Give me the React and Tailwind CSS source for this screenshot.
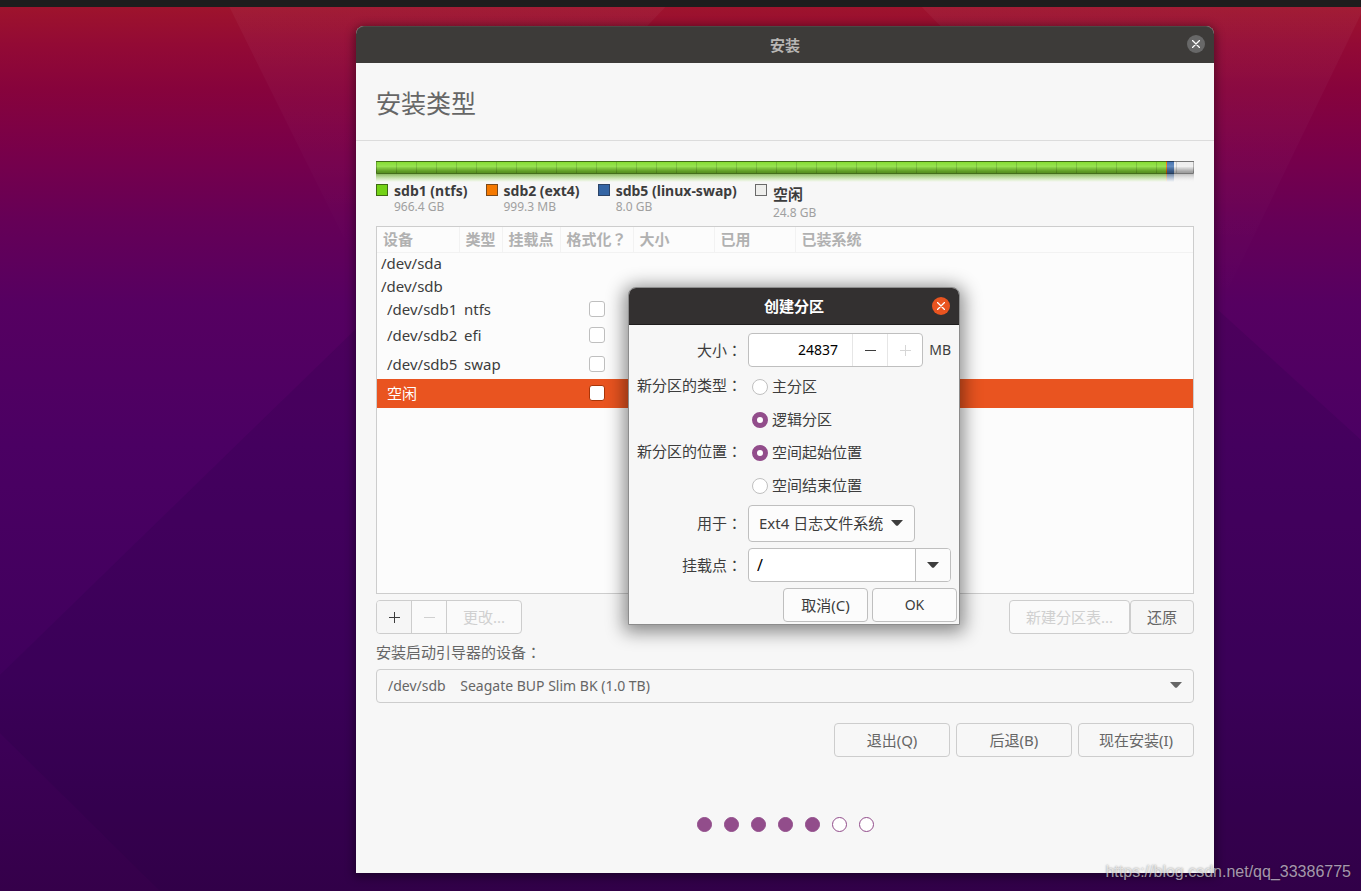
import { useState } from "react";

const PARTITIONS = [
  { name: "sdb1 (ntfs)", size: "966.4 GB", gb: 966.4, swatch: "bg-[#73d216] border-[#3f6b14]", fill: "bg-[#86dd33]" },
  { name: "sdb2 (ext4)", size: "999.3 MB", gb: 1, swatch: "bg-[#f57900] border-[#7a4a1c]", fill: "bg-[#f57900]" },
  { name: "sdb5 (linux-swap)", size: "8.0 GB", gb: 8, swatch: "bg-[#3465a4] border-[#2c4467]", fill: "bg-[#4a77b4]" },
  { name: "空闲", size: "24.8 GB", gb: 24.8, swatch: "bg-[#eeeeec] border-[#6a6a6a]", fill: "bg-[#eeeeee]" },
];

const COLUMNS = [
  { label: "设备", width: "w-[82px]" },
  { label: "类型", width: "w-[43px]" },
  { label: "挂载点", width: "w-[58px]" },
  { label: "格式化？", width: "w-[73px]" },
  { label: "大小", width: "w-[81px]" },
  { label: "已用", width: "w-[81px]" },
  { label: "已装系统", width: "" },
];

const DEVICES = [
  { name: "/dev/sda", type: "", disk: true, height: "h-[23px]" },
  { name: "/dev/sdb", type: "", disk: true, height: "h-[23px]" },
  { name: "/dev/sdb1", type: "ntfs", height: "h-[23px]" },
  { name: "/dev/sdb2", type: "efi", height: "h-[29px]" },
  { name: "/dev/sdb5", type: "swap", height: "h-[29px]" },
  { name: "空闲", type: "", selected: true, height: "h-[29px]" },
];

const TOTAL_STEPS = 7;
const CURRENT_STEP = 5;

function Wallpaper() {
  return (
    <svg className="absolute inset-0 h-full w-full" viewBox="0 0 1361 891" preserveAspectRatio="none" aria-hidden="true">
      <defs>
        <linearGradient id="sky" x1="0" y1="0" x2="0" y2="1">
          <stop offset="0" stopColor="#a0152b" />
          <stop offset="0.05" stopColor="#930a35" />
          <stop offset="0.1" stopColor="#87033c" />
          <stop offset="0.17" stopColor="#78004a" />
          <stop offset="0.25" stopColor="#650057" />
          <stop offset="0.34" stopColor="#560061" />
          <stop offset="0.5" stopColor="#4b0063" />
          <stop offset="0.75" stopColor="#40005d" />
          <stop offset="0.88" stopColor="#3a0053" />
          <stop offset="1" stopColor="#35004a" />
        </linearGradient>
        <linearGradient id="ray" x1="0" y1="0" x2="0" y2="1">
          <stop offset="0" stopColor="#fff" stopOpacity="0.04" />
          <stop offset="1" stopColor="#fff" stopOpacity="0" />
        </linearGradient>
      </defs>
      <rect width="1361" height="891" fill="url(#sky)" />
      <polygon points="226,0 672,0 500,180 360,270" fill="url(#ray)" />
      <polygon points="915,0 1361,0 1361,14 1218,310" fill="url(#ray)" />
      <polygon points="0,675 360,325 1218,310 1361,440 1361,891 160,891 0,733" fill="#1a0040" fillOpacity="0.14" />
    </svg>
  );
}

function CloseButton({ className, label }) {
  return (
    <button
      type="button"
      aria-label={label}
      className={`absolute right-[9px] flex h-[18px] w-[18px] items-center justify-center rounded-full text-white ${className}`}
    >
      <svg viewBox="0 0 8 8" className="h-2 w-2" stroke="currentColor" strokeWidth="1.3" strokeLinecap="round">
        <path d="M0.5 0.5 L7.5 7.5 M7.5 0.5 L0.5 7.5" />
      </svg>
    </button>
  );
}

function Caret({ className }) {
  return (
    <svg viewBox="0 0 12 6" className={`h-1.5 w-3 ${className}`} fill="currentColor" aria-hidden="true">
      <path d="M0 0 H12 L7 5.4 Q6 6 5 5.4 Z" />
    </svg>
  );
}

function Sign({ plus }) {
  return (
    <svg viewBox="0 0 11 11" className="h-[11px] w-[11px]" stroke="currentColor" aria-hidden="true">
      <path d={plus ? "M0 5.5 H11 M5.5 0 V11" : "M0 5.5 H11"} />
    </svg>
  );
}

function DiskBar() {
  return (
    <div>
      <div className="relative flex h-[13px]">
        {PARTITIONS.map(p => (
          <div key={p.name} className={`min-w-px basis-0 ${p.fill}`} style={{ flexGrow: p.gb }} />
        ))}
        <div className="absolute inset-0 border border-b-black/50 border-black/25 bg-linear-to-b from-white/0 via-white/15 via-40% to-black/35" />
        <div className="absolute inset-y-px left-px right-0 bg-[repeating-linear-gradient(to_right,transparent_0px,transparent_19px,rgba(0,0,0,0.14)_19px,rgba(0,0,0,0.14)_20px)]" />
      </div>
      {/* reflection */}
      <div className="relative flex h-2">
        {PARTITIONS.map(p => (
          <div key={p.name} className={`min-w-px basis-0 ${p.fill}`} style={{ flexGrow: p.gb }} />
        ))}
        <div className="absolute inset-0 bg-linear-to-b from-black/30 to-transparent" />
        <div className="absolute inset-0 bg-linear-to-b from-[#f7f7f7]/30 to-[#f7f7f7]" />
      </div>
    </div>
  );
}

function Legend() {
  return (
    <ul className="flex items-start gap-[18px]">
      {PARTITIONS.map(p => (
        <li key={p.name} className="flex items-start gap-1.5">
          <span className={`mt-0.5 h-3 w-3 border ${p.swatch}`} />
          <div>
            <div className={`font-bold text-[#3d3d3d] ${p.name === "空闲" ? "text-[15px] leading-6" : "text-sm leading-[18px]"}`}>{p.name}</div>
            <div className="text-xs leading-[13px] text-[#a0a0a0]">{p.size}</div>
          </div>
        </li>
      ))}
    </ul>
  );
}

function DeviceTable() {
  return (
    <div className="min-h-[368px] border border-[#cdcdcd] bg-[#fcfcfc]">
      <table className="w-full table-fixed border-collapse text-left">
        <thead>
          <tr className="h-[25px]">
            {COLUMNS.map(col => (
              <th
                key={col.label}
                className={`border-b border-r border-[#f2f2f2] py-0 pl-1.5 font-bold leading-6 whitespace-nowrap text-[#b1b1b1] last:border-r-0 ${col.width}`}
              >
                {col.label}
              </th>
            ))}
          </tr>
        </thead>
        <tbody>
          {DEVICES.map(d => (
            <tr key={d.name} className={`${d.height} ${d.selected ? "bg-[#e95420] text-white" : "text-[#3d3d3d]"}`}>
              <td className={`p-0 pb-0.5 leading-5 whitespace-nowrap ${d.disk ? "pl-1" : "pl-2.5"}`}>{d.name}</td>
              <td className="p-0 pb-0.5 pl-[5px] leading-5 whitespace-nowrap">{d.type}</td>
              <td className="p-0" />
              <td className="p-0 pb-0.5">
                {!d.disk && (
                  <input
                    type="checkbox"
                    aria-label={`格式化 ${d.name}`}
                    className={`mx-auto block h-4 w-4 appearance-none rounded-[3px] border bg-white checked:bg-[#924d8b] ${
                      d.selected ? "border-[#a83508]" : "border-[#bfbfbf]"
                    }`}
                  />
                )}
              </td>
              <td className="p-0" />
              <td className="p-0" />
              <td className="p-0" />
            </tr>
          ))}
        </tbody>
      </table>
    </div>
  );
}

function TableActions() {
  return (
    <div className="mt-1.5 flex h-[34px] justify-between">
      <div className="flex overflow-hidden rounded border border-[#cdcdcd] bg-[#fafafa]">
        <button type="button" aria-label="添加" className="flex w-[35px] items-center justify-center border-r border-[#cdcdcd] bg-[#f6f6f6] text-[#3d3d3d]">
          <Sign plus />
        </button>
        <button type="button" disabled aria-label="删除" className="flex w-[35px] items-center justify-center border-r border-[#cdcdcd] text-[#d0d0d0]">
          <Sign />
        </button>
        <button type="button" disabled className="w-[74px] text-[#d0d0d0]">更改...</button>
      </div>
      <div className="flex">
        <button type="button" disabled className="w-[121px] rounded border border-[#cdcdcd] bg-[#fafafa] text-[#d0d0d0]">新建分区表...</button>
        <button type="button" className="w-16 rounded border border-[#cdcdcd] bg-[#f6f6f6] text-[#666666]">还原</button>
      </div>
    </div>
  );
}

function Radio({ name, label, checked, onChange }) {
  return (
    <label className="flex h-[27px] items-center gap-1">
      <input
        type="radio"
        name={name}
        checked={checked}
        onChange={onChange}
        className="ml-1 h-4 w-4 appearance-none rounded-full border border-[#bfbfbf] bg-white checked:border-[5px] checked:border-[#924d8b]"
      />
      <span>{label}</span>
    </label>
  );
}

function PartitionDialog() {
  const [size, setSize] = useState("24837");
  const [type, setType] = useState("logical");
  const [place, setPlace] = useState("begin");
  const [mount, setMount] = useState("/");

  return (
    <section
      role="dialog"
      aria-label="创建分区"
      className="absolute left-[272px] top-[261px] w-[332px] overflow-hidden rounded-t-lg border border-[#8c8c8c] bg-[#f7f7f7] text-[#3d3d3d] shadow-[0_3px_18px_4px_rgba(0,0,0,0.45)]"
    >
      <header className="relative flex h-[37px] items-center justify-center border-b border-[#1f1d1d] bg-[#333030] font-bold text-white">
        <h2>创建分区</h2>
        <CloseButton label="关闭" className="top-[9px] bg-[#e95420]" />
      </header>
      <form onSubmit={e => e.preventDefault()} className="pb-0.5 pl-2 pr-0.5 pt-2">
        <div className="grid grid-cols-[105px_1fr] gap-1.5 pr-1.5">
          <label htmlFor="size" className="self-center text-right">大小：</label>
          <div className="flex items-center justify-between">
            <div className="flex h-[34px] w-[175px] overflow-hidden rounded border border-[#bfbfbf] bg-white">
              <input
                id="size"
                type="text"
                inputMode="numeric"
                value={size}
                onChange={e => setSize(e.target.value)}
                className="min-w-0 flex-1 pr-3.5 text-right text-sm text-black outline-none"
              />
              <button type="button" aria-label="减少" onClick={() => setSize(String(Number(size) - 1))} className="flex w-[35px] items-center justify-center border-l border-[#e6e6e6]">
                <Sign />
              </button>
              <button type="button" aria-label="增加" disabled className="flex w-[35px] items-center justify-center border-l border-[#e6e6e6] text-[#d6d6d6]">
                <Sign plus />
              </button>
            </div>
            <span className="text-sm">MB</span>
          </div>

          <span className="text-right leading-[25px]">新分区的类型：</span>
          <div className="flex flex-col gap-1.5">
            <Radio name="type" label="主分区" checked={type === "primary"} onChange={() => setType("primary")} />
            <Radio name="type" label="逻辑分区" checked={type === "logical"} onChange={() => setType("logical")} />
          </div>

          <span className="text-right leading-[25px]">新分区的位置：</span>
          <div className="flex flex-col gap-1.5">
            <Radio name="place" label="空间起始位置" checked={place === "begin"} onChange={() => setPlace("begin")} />
            <Radio name="place" label="空间结束位置" checked={place === "end"} onChange={() => setPlace("end")} />
          </div>

          <label htmlFor="use" className="self-center text-right">用于：</label>
          <div className="relative w-[167px]">
            <select id="use" className="h-[37px] w-full appearance-none rounded border border-[#bfbfbf] bg-[#fcfcfc] pl-2.5 outline-none">
              <option>Ext4 日志文件系统</option>
            </select>
            <Caret className="pointer-events-none absolute right-3 top-[15px]" />
          </div>

          <label htmlFor="mount" className="self-center text-right">挂载点：</label>
          <div className="flex h-[34px] overflow-hidden rounded border border-[#bfbfbf] bg-white">
            <input
              id="mount"
              type="text"
              value={mount}
              onChange={e => setMount(e.target.value)}
              className="min-w-0 flex-1 pl-2 text-base text-black outline-none"
            />
            <button type="button" aria-label="选择挂载点" className="flex w-[35px] items-center justify-center border-l border-[#bfbfbf] bg-[#fcfcfc]">
              <Caret />
            </button>
          </div>
        </div>

        <div className="mt-1.5 flex justify-end gap-1">
          <button type="button" className="h-[34px] w-[85px] rounded border border-[#bfbfbf] bg-[#fcfcfc]">取消(C)</button>
          <button type="submit" className="h-[34px] w-[85px] rounded border border-[#bfbfbf] bg-[#fcfcfc] text-sm">OK</button>
        </div>
      </form>
    </section>
  );
}

export default function App() {
  return (
    <div className="relative min-h-screen overflow-hidden bg-[#35004a] pb-[18px] font-['Noto_Sans','Noto_Sans_CJK_JP',sans-serif] text-[15px]">
      <Wallpaper />
      <div className="relative h-[7px] bg-[#1d1d1d]" />

      <main className="relative ml-[356px] mr-[147px] mt-[19px] rounded-t-lg bg-[#f7f7f7] pb-[41px] text-[#666666] shadow-[0_2px_10px_2px_rgba(0,0,0,0.4)]">
        <header className="relative flex h-[37px] items-center justify-center rounded-t-lg border-t border-[#4b4946] bg-[#3d3b39] font-bold text-[#b8b6b4]">
          <h1>安装</h1>
          <CloseButton label="关闭" className="top-2 bg-[#686868]" />
        </header>

        <div className="border-b border-[#dcdcdc] px-5 pb-[17px] pt-5">
          <h2 className="text-[25px] leading-10">安装类型</h2>
        </div>

        <div className="px-5 pt-5">
          <DiskBar />
          <Legend />
          <div className="mt-[7px]">
            <DeviceTable />
          </div>
          <TableActions />

          <label htmlFor="boot" className="mt-1.5 block leading-6">安装启动引导器的设备：</label>
          <div className="relative mt-[5px]">
            <select id="boot" className="h-[34px] w-full appearance-none rounded border border-[#cdcdcd] bg-[#f7f7f7] pl-[11px] text-sm outline-none">
              <option>{"/dev/sdb\u00a0\u00a0\u00a0\u00a0Seagate BUP Slim BK (1.0 TB)"}</option>
            </select>
            <Caret className="pointer-events-none absolute right-3 top-[13px]" />
          </div>

          <div className="mt-5 flex justify-end gap-1.5">
            {["退出(Q)", "后退(B)", "现在安装(I)"].map(label => (
              <button key={label} type="button" className="h-[34px] w-[116px] rounded border border-[#cdcdcd] bg-[#f7f7f7]">
                {label}
              </button>
            ))}
          </div>

          <div className="mt-[60px] flex justify-center gap-3">
            {Array.from({ length: TOTAL_STEPS }, (_, i) => (
              <span
                key={i}
                className={`h-[15px] w-[15px] rounded-full border border-[#924d8b] ${i < CURRENT_STEP ? "bg-[#924d8b]" : "bg-white"}`}
              />
            ))}
          </div>
        </div>

        <PartitionDialog />
      </main>

      <p className="absolute bottom-[7px] right-2.5 font-['Liberation_Sans',sans-serif] text-base leading-6 text-white/60 [text-shadow:0_0_2px_rgba(0,0,0,0.45)]">
        https://blog.csdn.net/qq_33386775
      </p>
    </div>
  );
}
